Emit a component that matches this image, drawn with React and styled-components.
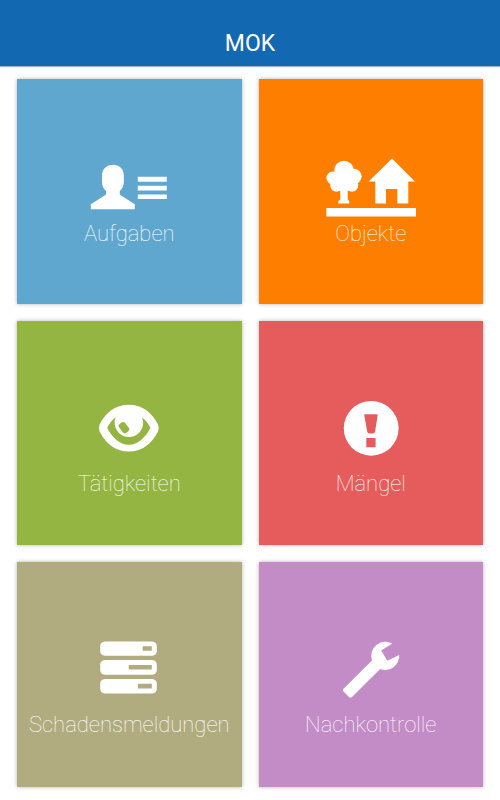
import styled, { createGlobalStyle } from "styled-components"

const GlobalStyle = createGlobalStyle`
    body {
        margin: 0;
        background: #ffffff;
        font-family: Roboto, "Liberation Sans", sans-serif;
    }
`

const Header = styled.header`
    display: flex;
    justify-content: center;
    padding: 28px 16px 6px;
    background-color: #1269b1;
    box-shadow: 0 1px 1px rgba(18, 60, 140, 0.4);
`

const Title = styled.h1`
    margin: 0;
    color: white;
    font-size: 23px;
    line-height: 32px;
    font-weight: 400;
`

const Grid = styled.main`
    display: grid;
    grid-template-columns: repeat(2, minmax(0, 1fr));
    gap: 17px;
    padding: 13px 17px;
`

const Tile = styled.button`
    display: flex;
    flex-direction: column;
    align-items: center;
    justify-content: center;
    aspect-ratio: 1;
    padding: 24px 0 0;
    border: none;
    color: white;
    font-family: inherit;
    background-color: ${(props) => props.$color};
    box-shadow: 0 0 4px rgba(0, 0, 0, 0.3);
    cursor: pointer;
`

const Icon = styled.svg`
    display: block;
    flex: none;
    width: 96px;
    height: ${(props) => (props.$short ? "62px" : "78px")};
    fill: white;
`

const Label = styled.span`
    font-size: 22px;
    line-height: 28px;
    font-weight: 100;
    white-space: nowrap;
`

function UserListIcon() {
    return (
        <Icon $short viewBox="0 0 96 62" aria-hidden="true">
            <path d="M32 6.8C25.500 6.800 21 11 21 17.500V24C21 28 22.500 31 25 33V35.500C25 36.500 24.500 37 23.500 37.600L9.800 46.200V51.300H53.800V46.200L40.100 37.600C39.200 37 38.800 36.500 38.800 35.500V33C41.300 31 42.800 28 42.800 24V17.500C42.800 11 38.500 6.800 32 6.800Z" />
            <path d="M56.800 18.700h29v5h-29zM56.800 27.700h29v4.800h-29zM56.800 36.500h29v4.500h-29z" />
        </Icon>
    )
}

function ObjectsIcon() {
    return (
        <Icon $short viewBox="0 0 96 62" aria-hidden="true">
            <circle cx="21" cy="12.400" r="9.700" />
            <circle cx="9.800" cy="20" r="6.400" />
            <circle cx="31" cy="18.500" r="7.700" />
            <circle cx="13.500" cy="27.500" r="6.200" />
            <circle cx="29" cy="27.500" r="6.200" />
            <path d="M12 14h18v18.500h-18zM17.300 30h7.400v11.500l1.600 1.500v2.500h-11v-2.500l2-1.500z" />
            <path d="M69 .4L92 23.500H85.300V45.500H74.300V31H63V45.500H52.300V23.500H45.600Z" />
            <path d="M3.300 50h89.700v8.500H3.300z" />
        </Icon>
    )
}

function EyeIcon() {
    return (
        <Icon viewBox="0 -1 96 78" aria-hidden="true">
            <path
                fillRule="evenodd"
                d="M47.800 11.800C62 11.800 71 20 77 31.500Q78.600 35 77 38.500C71 50 62 58.600 47.800 58.600S24.600 50 18.600 38.500Q17 35 18.600 31.500C24.600 20 33.600 11.800 47.800 11.800ZM34.800 24.300C31 27 28 31 26.200 34.800C31.500 45 38.500 51.800 47.800 51.800S64.100 45 69.400 34.800C67.600 31 64.600 27 60.800 24.300C62 26.500 62.300 28.500 62 31.500A14.200 14.200 0 0 1 33.800 31.500C33.400 28.500 33.600 26.500 34.800 24.300Z"
            />
            <rect
                x="39.300"
                y="29.200"
                width="7.400"
                height="11"
                rx="2.500"
                fill="#94b541"
                transform="rotate(-37 43 34.700)"
            />
        </Icon>
    )
}

function WarningIcon() {
    return (
        <Icon viewBox="0 -1 96 78" aria-hidden="true">
            <path
                fillRule="evenodd"
                d="M48.200 7.900a27.400 27.400 0 1 1 0 54.800a27.400 27.400 0 1 1 0-54.800ZM42.200 21.300Q41.100 21.300 41.300 22.500L44.200 38.500Q44.600 40.600 46.400 40.600H50Q51.700 40.600 52.100 38.500L54.600 22.500Q54.700 21.300 53.700 21.300ZM43.300 45V54.300H52.600V45Z"
            />
        </Icon>
    )
}

function ServerIcon() {
    return (
        <Icon viewBox="0 -1 96 78" aria-hidden="true">
            <path
                fillRule="evenodd"
                d="M24 7.400H71.200Q75.800 8 75.800 12V17Q75.800 21.200 71.200 21.800H24Q19.200 21.200 19.200 17V12Q19.200 8 24 7.400ZM61.700 12.200V16.800H70.800V12.200ZM24 26.100H71.200Q75.800 26.700 75.800 30.700V36Q75.800 40.200 71.200 40.800H24Q19.200 40.200 19.200 36V30.700Q19.200 26.700 24 26.100ZM47.700 30.900V35.600H70.800V30.900ZM24 44.900H71.200Q75.800 45.500 75.800 49.500V54.700Q75.800 58.900 71.200 59.500H24Q19.200 58.900 19.200 54.700V49.500Q19.200 45.500 24 44.900ZM56.900 49.800V54.500H70.800V49.800Z"
            />
        </Icon>
    )
}

function WrenchIcon() {
    return (
        <Icon viewBox="0 -1 96 78" aria-hidden="true">
            <path d="M69.300 9.400A14.300 14.300 0 0 0 48.900 26.400L20.500 54.800Q19.300 56.200 20.500 57.400L26 63Q27.500 64.300 29 63L57.200 35.100A14.300 14.300 0 0 0 76.300 21.100L64.300 26.800L58.200 16.400Z" />
        </Icon>
    )
}

const tiles = [
    { label: "Aufgaben", color: "#5fa7cf", icon: UserListIcon },
    { label: "Objekte", color: "#fe7e00", icon: ObjectsIcon },
    { label: "Tätigkeiten", color: "#94b541", icon: EyeIcon },
    { label: "Mängel", color: "#e65c5c", icon: WarningIcon },
    { label: "Schadensmeldungen", color: "#b1ac80", icon: ServerIcon },
    { label: "Nachkontrolle", color: "#c38cc7", icon: WrenchIcon },
]

export default function App() {
    return (
        <>
            <GlobalStyle />
            <Header>
                <Title>MOK</Title>
            </Header>
            <Grid>
                {tiles.map(({ label, color, icon: TileIcon }) => (
                    <Tile key={label} type="button" $color={color}>
                        <TileIcon />
                        <Label>{label}</Label>
                    </Tile>
                ))}
            </Grid>
        </>
    )
}
